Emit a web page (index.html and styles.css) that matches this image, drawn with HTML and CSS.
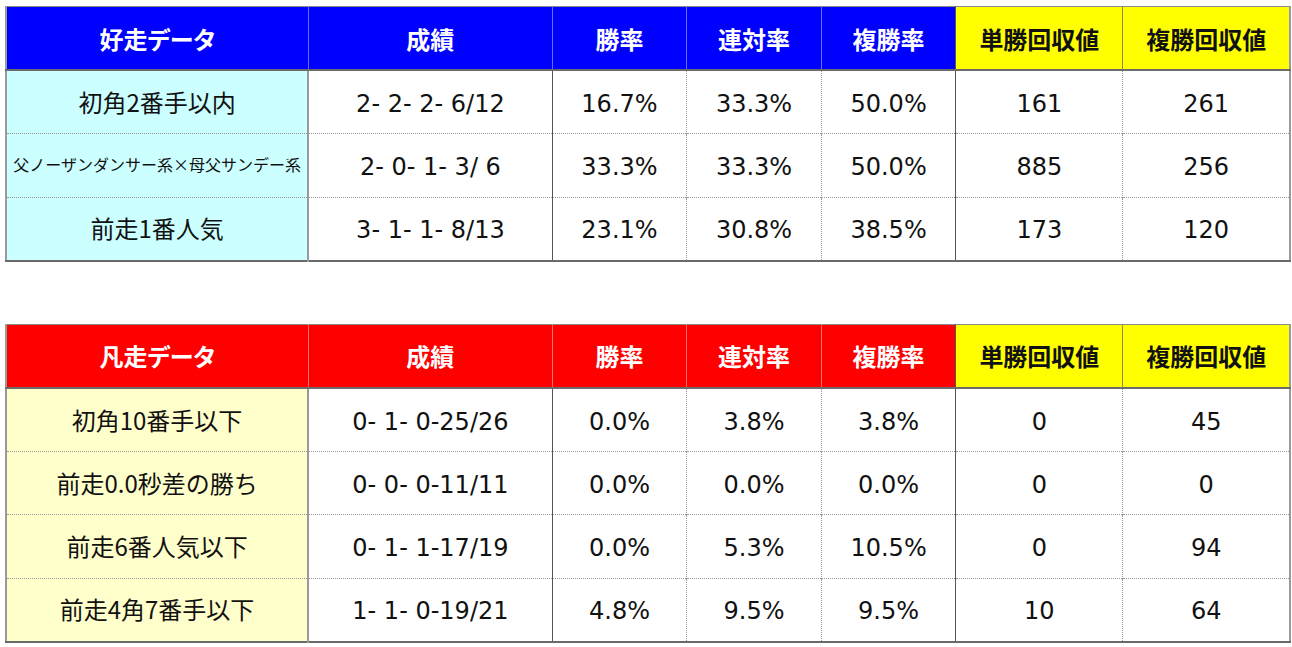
FILE: index.html
```html
<!DOCTYPE html>
<html lang="ja">
<head>
<meta charset="utf-8">
<link rel="stylesheet" href="styles.css">
</head>
<body>
<div class="page">
<table class="data good">
  <colgroup>
    <col class="c-label"><col class="c-rec"><col class="c-rate"><col class="c-rate"><col class="c-rate"><col class="c-ret"><col class="c-ret">
  </colgroup>
  <thead>
    <tr>
      <th class="label">好走データ</th>
      <th class="solid">成績</th>
      <th class="solid">勝率</th>
      <th>連対率</th>
      <th>複勝率</th>
      <th class="ret solid">単勝回収値</th>
      <th class="ret">複勝回収値</th>
    </tr>
  </thead>
  <tbody>
    <tr><td class="label">初角2番手以内</td><td class="solid">2- 2- 2- 6/12</td><td class="solid">16.7%</td><td>33.3%</td><td>50.0%</td><td class="solid">161</td><td>261</td></tr>
    <tr><td class="label small">父ノーザンダンサー系×母父サンデー系</td><td class="solid">2- 0- 1- 3/ 6</td><td class="solid">33.3%</td><td>33.3%</td><td>50.0%</td><td class="solid">885</td><td>256</td></tr>
    <tr><td class="label">前走1番人気</td><td class="solid">3- 1- 1- 8/13</td><td class="solid">23.1%</td><td>30.8%</td><td>38.5%</td><td class="solid">173</td><td>120</td></tr>
  </tbody>
</table>

<table class="data bad">
  <colgroup>
    <col class="c-label"><col class="c-rec"><col class="c-rate"><col class="c-rate"><col class="c-rate"><col class="c-ret"><col class="c-ret">
  </colgroup>
  <thead>
    <tr>
      <th class="label">凡走データ</th>
      <th class="solid">成績</th>
      <th class="solid">勝率</th>
      <th>連対率</th>
      <th>複勝率</th>
      <th class="ret solid">単勝回収値</th>
      <th class="ret">複勝回収値</th>
    </tr>
  </thead>
  <tbody>
    <tr><td class="label">初角10番手以下</td><td class="solid">0- 1- 0-25/26</td><td class="solid">0.0%</td><td>3.8%</td><td>3.8%</td><td class="solid">0</td><td>45</td></tr>
    <tr><td class="label">前走0.0秒差の勝ち</td><td class="solid">0- 0- 0-11/11</td><td class="solid">0.0%</td><td>0.0%</td><td>0.0%</td><td class="solid">0</td><td>0</td></tr>
    <tr><td class="label">前走6番人気以下</td><td class="solid">0- 1- 1-17/19</td><td class="solid">0.0%</td><td>5.3%</td><td>10.5%</td><td class="solid">0</td><td>94</td></tr>
    <tr><td class="label">前走4角7番手以下</td><td class="solid">1- 1- 0-19/21</td><td class="solid">4.8%</td><td>9.5%</td><td>9.5%</td><td class="solid">10</td><td>64</td></tr>
  </tbody>
</table>
</div>
</body>
</html>
```

FILE: styles.css
```css
html, body {
  margin: 0;
  padding: 0;
  background: #ffffff;
}

.page {
  padding: 6px 0 0 5px;
  display: flex;
  flex-direction: column;
  gap: 62px;
}

.data {
  width: 1286px;
  table-layout: fixed;
  border-collapse: collapse;
  font-family: "DejaVu Sans", "Noto Sans CJK JP", sans-serif;
  color: #111;
  border-top: 1px solid #8a8a8a;
  border-left: 2px solid #9a9a9a;
  border-right: 2px solid #9a9a9a;
  border-bottom: 2px solid #6a6a6a;
}

.c-label { width: 302px; }
.c-rec { width: 244px; }
.c-rate { width: 134.5px; }
.c-ret { width: 167px; }

.data th {
  height: 62px;
  padding: 0;
  font-family: "Noto Sans CJK JP", sans-serif;
  font-weight: 700;
  font-size: 24px;
  font-feature-settings: "palt";
  color: #ffffff;
  text-align: center;
  vertical-align: middle;
  border-left: 1px solid #6a6aff;
  border-bottom: 2px solid #6b6b6b;
}

.good th { background: #0000ff; }
.bad th { background: #ff0000; border-left-color: #ff7070; }

.data th.label { border-left: none; }
.data th.ret {
  background: #ffff00;
  color: #111;
  border-left: 1px solid #8a8a40;
}
.data th.ret.solid { border-left: 1px solid #555; }

.data td {
  height: 59.3px;
  padding: 3px 0 0 0;
  font-size: 24px;
  text-align: center;
  vertical-align: middle;
  border-left: 1px dotted #9a9a9a;
  border-top: 1px dotted #9a9a9a;
  background: #ffffff;
}

.data tbody tr:first-child td { border-top: none; }

.data td.solid { border-left: 1px solid #555555; }

.data td.label {
  padding: 0 0 2px 0;
  font-family: "Noto Sans CJK JP", sans-serif;
  border-left: none;
  border-right: 2px solid #9a9a9a;
}
.good td.label { background: #ccffff; }
.bad td.label { background: #ffffcc; }

.data td.label.small {
  font-size: 16px;
  white-space: nowrap;
}

.data td.label + td.solid { border-left: 2px solid #9a9a9a; }
```
